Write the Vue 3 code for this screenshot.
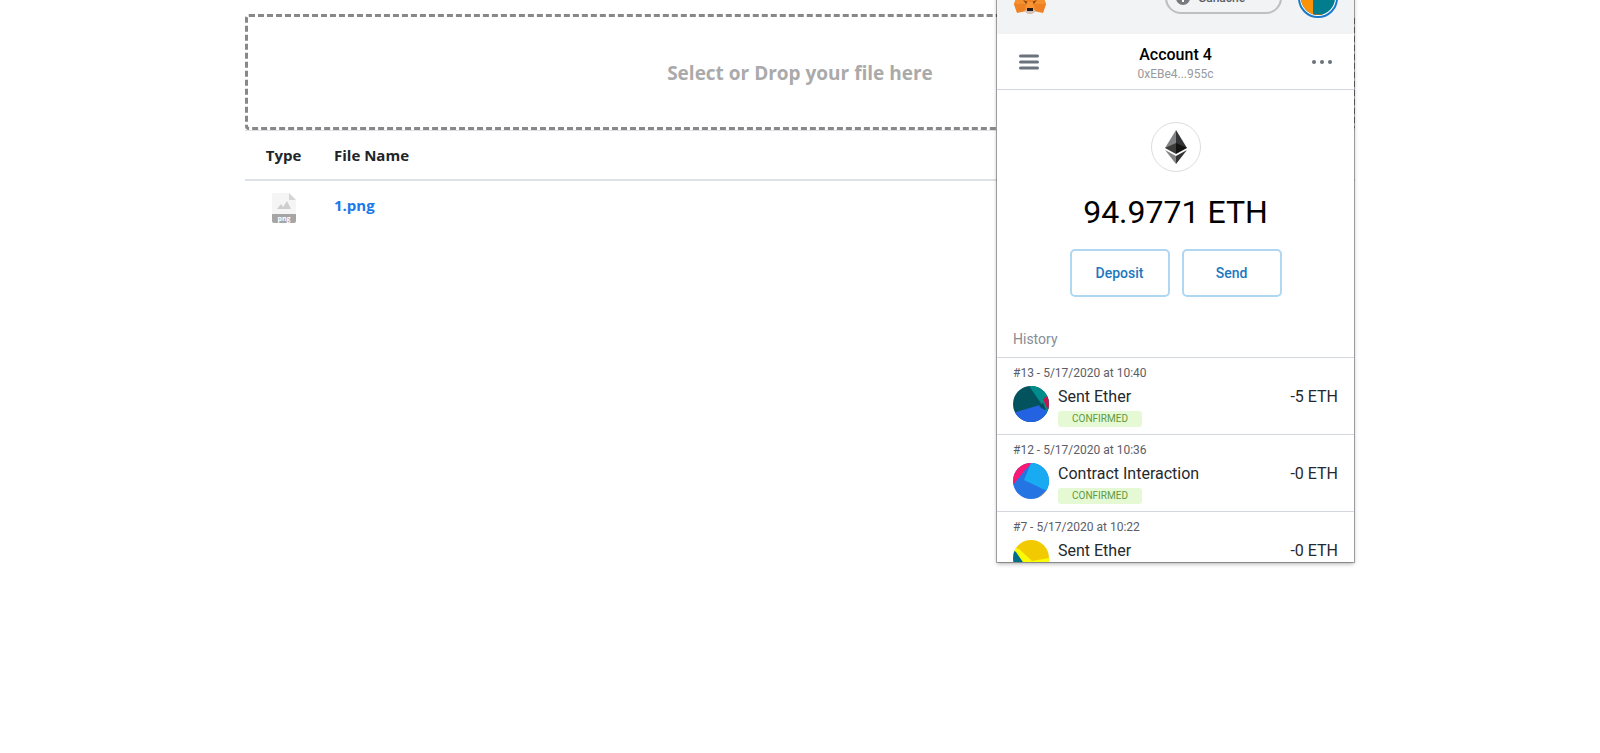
<script setup>
const files = [{ name: '1.png', ext: 'png' }]

const history = [
  {
    id: 13, date: '5/17/2020 at 10:40', title: 'Sent Ether', amount: '-5 ETH', status: 'Confirmed',
    base: '#03535f',
    shapes: [
      { fill: '#018c8c', points: '16,0 36,0 36,36 30,20' },
      { fill: '#c7144c', points: '30,13 36,9 36,26 34,22' },
      { fill: '#2362e1', points: '0,27 27,19 33,23 36,36 0,36' },
      { fill: '#034b5c', points: '26,20 30,17 33,24 30,23' },
    ],
  },
  {
    id: 12, date: '5/17/2020 at 10:36', title: 'Contract Interaction', amount: '-0 ETH', status: 'Confirmed',
    base: '#2475e3',
    shapes: [
      { fill: '#fb1874', points: '0,0 19,0 12,7 0,22' },
      { fill: '#18abf2', points: '18,0 36,0 36,27 34,28 11,17' },
      { fill: '#c8a04b', points: '36,25 36,36 24,36' },
    ],
  },
  {
    id: 7, date: '5/17/2020 at 10:22', title: 'Sent Ether', amount: '-0 ETH', status: '',
    base: '#f2ca02',
    shapes: [
      { fill: '#fafb04', points: '0,7 6,9 19,21 36,18 36,36 0,36' },
      { fill: '#016e8a', points: '0,10 3,12 14,28 0,30' },
    ],
  },
]
</script>

<template>
  <main class="container">
    <button class="dropzone" type="button">Select or Drop your file here</button>

    <table class="files">
      <thead>
        <tr>
          <th class="type" scope="col">Type</th>
          <th scope="col">File Name</th>
        </tr>
      </thead>
      <tbody>
        <tr v-for="file in files" :key="file.name">
          <td class="type">
            <svg class="file-icon" width="26" height="32" viewBox="0 0 26 32" aria-hidden="true">
              <path d="M2 0h16l7 7v15H1V1z" fill="#f5f5f5" />
              <path d="M18 0l7 7h-7z" fill="#d4d4d4" />
              <path d="M6 16l4-5 2 3 4-6 4 8z" fill="#cecece" />
              <path d="M1 21h24v7a2 2 0 0 1-2 2H3a2 2 0 0 1-2-2z" fill="#a5a5a5" />
              <text x="13" y="28" text-anchor="middle" class="ext">{{ file.ext }}</text>
            </svg>
          </td>
          <td><a href="#">{{ file.name }}</a></td>
        </tr>
      </tbody>
    </table>

    <section class="wallet" aria-label="Wallet">
      <header class="wallet-top">
        <svg class="fox" width="34" height="32" viewBox="0 0 34 32" aria-hidden="true">
          <path d="M2 0l12 7h6l12-7-2 14 3 8-3 8-8-1-3 2h-4l-3-2-8 1-3-8 3-8z" fill="#f5841f" />
          <path d="M1 22l11 0 1 7-9 2z" fill="#ee8124" />
          <path d="M33 22l-11 0-1 7 9 2z" fill="#ee8124" />
          <path d="M4 15l9 4-1 3H1zM30 15l-9 4 1 3h11z" fill="#f68f2e" />
          <path d="M10 18l5 2-1 3zM24 18l-5 2 1 3z" fill="#7a431c" />
          <path d="M14 20l-2 7h10l-2-7z" fill="#f99435" />
          <path d="M11 29l3-2h6l3 2-4 3h-4z" fill="#d5bfb2" />
          <path d="M14 26h6v3h-6z" fill="#1d1a1c" />
        </svg>
        <button class="network" type="button">
          <svg width="14" height="14" viewBox="0 0 14 14" aria-hidden="true">
            <circle cx="7" cy="7" r="7" fill="#777b80" />
            <path d="M4 5c0-4 6-4 6-1 0 2-2 2-2 4H6c0-2 2-3 2-4 0-1-2-1-2 1zM6 9h2v2H6z" fill="#fff" />
          </svg>
          <span>Ganache</span>
          <svg width="10" height="6" viewBox="0 0 10 6" aria-hidden="true">
            <path d="M1 0h8L5 5z" fill="#5b6067" />
          </svg>
        </button>
        <button class="avatar" type="button" aria-label="My accounts">
          <svg width="40" height="40" viewBox="0 0 40 40" aria-hidden="true">
            <defs><clipPath id="avatar-clip"><circle cx="20" cy="20" r="17" /></clipPath></defs>
            <circle cx="20" cy="20" r="19" fill="#fff" stroke="#1878cc" stroke-width="2" />
            <g clip-path="url(#avatar-clip)">
              <path d="M0 0h40v40H0z" fill="#027d8d" />
              <path d="M0 0h15v40H0z" fill="#fb9207" />
              <path d="M14 36l12 0v5H14z" fill="#8c6b2b" />
            </g>
          </svg>
        </button>
      </header>

      <div class="account-bar">
        <button class="icon-button" type="button" aria-label="Menu">
          <svg width="20" height="16" viewBox="0 0 20 16" aria-hidden="true">
            <path d="M1.500 2h17M1.500 8h17M1.500 14h17" stroke="#6a737d" stroke-width="3" stroke-linecap="round" />
          </svg>
        </button>
        <div class="account">
          <div class="account-name">Account 4</div>
          <div class="account-address">0xEBe4...955c</div>
        </div>
        <button class="icon-button" type="button" aria-label="Account options">
          <svg width="20" height="16" viewBox="0 0 20 16" aria-hidden="true">
            <g fill="#6a737d">
              <circle cx="2" cy="8" r="2" /><circle cx="10" cy="8" r="2" /><circle cx="18" cy="8" r="2" />
            </g>
          </svg>
        </button>
      </div>

      <div class="overview">
        <svg width="50" height="50" viewBox="0 0 50 50" aria-hidden="true">
          <circle cx="25" cy="25" r="24.500" fill="#fff" stroke="#dcdcdc" />
          <path d="M25 8v18L14 26z" fill="#828384" />
          <path d="M25 8v18l11 0z" fill="#343434" />
          <path d="M14 26l11-5v11z" fill="#3c3c3b" />
          <path d="M36 26l-11-5v11z" fill="#141414" />
          <path d="M14 28l11 6v8z" fill="#828384" />
          <path d="M36 28l-11 6v8z" fill="#343434" />
        </svg>
        <div class="balance">94.9771 ETH</div>
        <div class="actions">
          <button type="button">Deposit</button>
          <button type="button">Send</button>
        </div>
      </div>

      <h2 class="history-title">History</h2>
      <ul class="history">
        <li v-for="tx in history" :key="tx.id">
          <div class="date">#{{ tx.id }} - {{ tx.date }}</div>
          <div class="tx">
            <svg class="identicon" width="36" height="36" viewBox="0 0 36 36" aria-hidden="true">
              <rect width="36" height="36" :fill="tx.base" />
              <polygon v-for="shape in tx.shapes" :key="shape.points" :points="shape.points" :fill="shape.fill" />
            </svg>
            <div class="tx-main">
              <div class="tx-title">{{ tx.title }}</div>
              <div v-if="tx.status" class="status">{{ tx.status }}</div>
            </div>
            <div class="tx-amount">{{ tx.amount }}</div>
          </div>
        </li>
      </ul>
    </section>
  </main>
</template>

<style>
body {
  margin: 0;
  background: #fff;
}
</style>

<style scoped>
* {
  box-sizing: border-box;
}

button {
  margin: 0;
  padding: 0;
  border: 0;
  background: none;
  font-family: inherit;
  cursor: pointer;
}

svg {
  display: block;
  flex: none;
}

.container {
  position: relative;
  max-width: 1110px;
  min-height: 100vh;
  margin: 0 auto;
  padding-top: 14px;
  font-family: "Open Sans", "Noto Sans", sans-serif;
  color: #212529;
}

.dropzone {
  display: block;
  width: 100%;
  height: 116px;
  padding-top: 2px;
  border: 3px dashed #888;
  border-radius: 4px;
  color: #aaa;
  font-size: 19px;
  font-weight: 700;
}

.files {
  width: 100%;
  border-collapse: collapse;
  font-size: 15px;
  line-height: 24px;
  text-align: left;
}

.files th,
.files td {
  padding: 12px;
  border-top: 1px solid #dee2e6;
  vertical-align: top;
}

.files thead th {
  border-bottom: 2px solid #dee2e6;
}

.files .type {
  width: 77px;
  text-align: center;
}

.files a {
  color: #1a78ea;
  font-weight: 700;
  text-decoration: none;
}

.file-icon {
  margin: 0 auto;
}

.ext {
  fill: #fff;
  font-size: 7px;
  font-weight: 700;
}

.wallet {
  position: absolute;
  top: -38px;
  right: 1px;
  width: 357px;
  height: 600px;
  overflow: hidden;
  background: #fff;
  box-shadow: 0 0 0 1px rgba(0, 0, 0, 0.3), 0 2px 4px rgba(0, 0, 0, 0.3);
  font-family: Roboto, sans-serif;
  color: #24292e;
}

.wallet-top {
  display: flex;
  align-items: center;
  height: 72px;
  padding: 0 16px;
  background: #f2f3f4;
}

.network {
  display: flex;
  align-items: center;
  gap: 8px;
  width: 117px;
  height: 32px;
  margin-left: auto;
  padding: 0 16px 0 9px;
  border: 2px solid #bbc0c5;
  border-radius: 16px;
  color: #5b5d67;
  font-size: 12px;
  font-weight: 500;
}

.network span {
  flex: 1;
  text-align: left;
}

.avatar {
  margin-left: 16px;
}

.account-bar {
  display: flex;
  align-items: center;
  justify-content: space-between;
  height: 56px;
  padding: 0 22px;
  border-bottom: 1px solid #d2d8dd;
}

.account {
  padding-top: 2px;
  text-align: center;
}

.account-name {
  color: #000;
  font-size: 16px;
  font-weight: 500;
  line-height: 22px;
}

.account-address {
  color: #989a9b;
  font-size: 12px;
  line-height: 16px;
}

.overview {
  display: flex;
  flex-direction: column;
  align-items: center;
  padding-top: 32px;
}

.balance {
  margin-top: 16px;
  color: #000;
  font-size: 32px;
  line-height: 48px;
}

.actions {
  display: flex;
  gap: 12px;
  margin-top: 13px;
}

.actions button {
  width: 100px;
  height: 48px;
  border: 2px solid #b0d7f2;
  border-radius: 5px;
  color: #1c78c0;
  font-size: 14px;
  font-weight: 500;
}

.history-title {
  margin: 24px 0 0;
  padding: 8px 16px;
  border-bottom: 1px solid #d2d8dd;
  color: #868d94;
  font-size: 14px;
  font-weight: 400;
  line-height: 20px;
}

.history {
  margin: 0;
  padding: 0;
  list-style: none;
}

.history li {
  height: 77px;
  padding: 8px 16px;
  border-bottom: 1px solid #d2d8dd;
}

.date {
  color: #5b5d67;
  font-size: 12px;
  line-height: 14px;
}

.tx {
  display: flex;
  margin-top: 5px;
}

.identicon {
  margin-top: 1px;
  border-radius: 50%;
}

.tx-main {
  flex: 1;
  margin-left: 9px;
}

.tx-title,
.tx-amount {
  font-size: 16px;
  line-height: 24px;
}

.status {
  width: 84px;
  margin-top: 2px;
  border-radius: 3px;
  background: #e6f9d5;
  color: #5f9a3c;
  font-size: 10px;
  line-height: 16px;
  text-align: center;
  text-transform: uppercase;
}
</style>
